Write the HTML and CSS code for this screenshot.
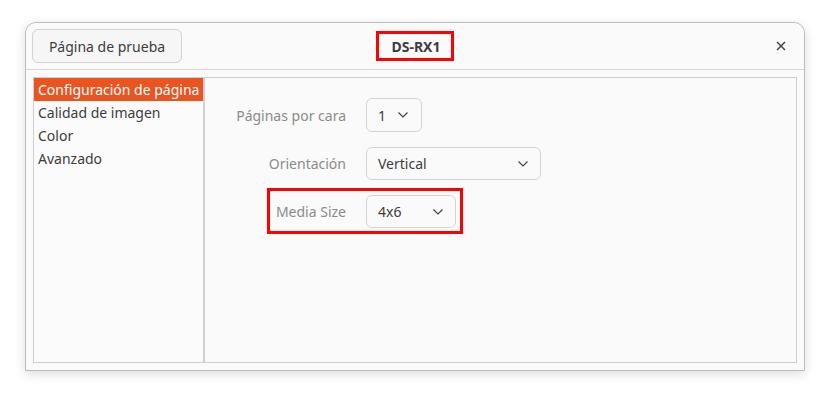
FILE: index.html
```html
<!DOCTYPE html>
<html lang="es">
<head>
<meta charset="utf-8">
<title>DS-RX1</title>
<link rel="stylesheet" href="styles.css">
</head>
<body>
<div class="window">
  <header class="header">
    <div class="header-start"><button class="btn">Página de prueba</button></div>
    <div class="title-wrap"><span class="title">DS-RX1</span><span class="mark mark-title"></span></div>
    <div class="header-end">
      <button class="close" aria-label="Cerrar">
        <svg width="10" height="10" viewBox="0 0 10 10"><path d="M1 1L9 9M9 1L1 9" stroke="#3d3d3d" stroke-width="1.4" fill="none"/></svg>
      </button>
    </div>
  </header>
  <main class="content">
    <div class="frame">
      <nav class="sidebar">
        <div class="item selected">Configuración de página</div>
        <div class="item">Calidad de imagen</div>
        <div class="item">Color</div>
        <div class="item">Avanzado</div>
      </nav>
      <section class="panel">
        <div class="form">
          <div class="label">Páginas por cara</div>
          <div class="combo combo-sm"><span>1</span><svg class="chev" width="10" height="6" viewBox="0 0 10 6"><path d="M0.5 0.5L5 5L9.5 0.5" stroke="#3d3d3d" stroke-width="1.1" fill="none"/></svg></div>
          <div class="label">Orientación</div>
          <div class="combo combo-lg"><span>Vertical</span><svg class="chev" width="10" height="6" viewBox="0 0 10 6"><path d="M0.5 0.5L5 5L9.5 0.5" stroke="#3d3d3d" stroke-width="1.1" fill="none"/></svg></div>
          <div class="label label-hl">Media Size<span class="mark mark-row"></span></div>
          <div class="combo combo-md"><span>4x6</span><svg class="chev" width="10" height="6" viewBox="0 0 10 6"><path d="M0.5 0.5L5 5L9.5 0.5" stroke="#3d3d3d" stroke-width="1.1" fill="none"/></svg></div>
        </div>
      </section>
    </div>
  </main>
</div>
</body>
</html>
```
FILE: styles.css
```css
* { box-sizing: border-box; }
html, body { margin: 0; padding: 0; background: #ffffff; }
body {
  font-family: "Noto Sans", "Open Sans", sans-serif;
  color: #3d3d3d;
  font-size: 14px;
  width: 831px;
  height: 400px;
  overflow: hidden;
}
.window {
  margin: 22px 0 0 25px;
  width: 780px;
  height: 349px;
  border: 1px solid #bcbcbc;
  border-radius: 11px 11px 0 0;
  background: #fafafa;
  box-shadow: 0 3px 12px rgba(0,0,0,0.14);
  display: flex;
  flex-direction: column;
}
.header {
  height: 47px;
  border-bottom: 1px solid #d6d6d6;
  display: grid;
  grid-template-columns: 1fr auto 1fr;
  align-items: center;
  padding: 0 6px;
  border-radius: 11px 11px 0 0;
  background: #fafafa;
}
.header-start { display: flex; }
.header-end { display: flex; justify-content: flex-end; }
.btn {
  font-family: inherit;
  font-size: 14px;
  color: #3d3d3d;
  width: 150px;
  height: 34px;
  background: #f6f6f6;
  border: 1px solid #d2d2d2;
  border-radius: 6px;
  padding: 0;
}
.title-wrap { position: relative; padding-left: 2px; }
.title { font-weight: bold; font-size: 14px; color: #3d3d3d; }
.mark { position: absolute; border: 3px solid #ff0000; pointer-events: none; }
.mark-title { left: -13px; right: -13px; top: -6px; bottom: -5px; }
.close {
  width: 34px; height: 34px;
  border: none; background: transparent;
  display: flex; align-items: center; justify-content: center;
  padding: 0;
}
.content {
  flex: 1;
  padding: 7px;
  display: flex;
}
.frame {
  flex: 1;
  border: 1px solid #cfcfcf;
  background: #fafafa;
  display: flex;
}
.sidebar {
  width: 171px;
  border-right: 2px solid #d0d0d0;
  background: #fbfbfb;
}
.item {
  height: 23px;
  line-height: 23px;
  padding-left: 4px;
  font-size: 14px;
  white-space: nowrap;
  color: #3d3d3d;
}
.item.selected { background: #e95420; color: #ffffff; }
.panel { flex: 1; padding-top: 20px; }
.form {
  display: grid;
  grid-template-columns: 141px auto;
  column-gap: 20px;
  row-gap: 15px;
  align-items: center;
  justify-items: start;
}
.label { justify-self: end; color: #8b8b8b; font-size: 14px; position: relative; }
.mark-row { left: -9px; top: -14px; width: 196px; height: 46px; }
.combo {
  height: 34px;
  border: 1px solid #d4d4d4;
  border-radius: 6px;
  background: #fafafa;
  display: flex;
  align-items: center;
  justify-content: space-between;
  padding: 0 13px 0 11px;
  font-size: 14px;
  color: #3d3d3d;
}
.combo-sm { width: 56px; }
.combo-lg { width: 175px; height: 33px; padding-right: 12px; }
.combo-md { width: 90px; height: 33px; padding-right: 12px; }
.chev { display: block; }
```
